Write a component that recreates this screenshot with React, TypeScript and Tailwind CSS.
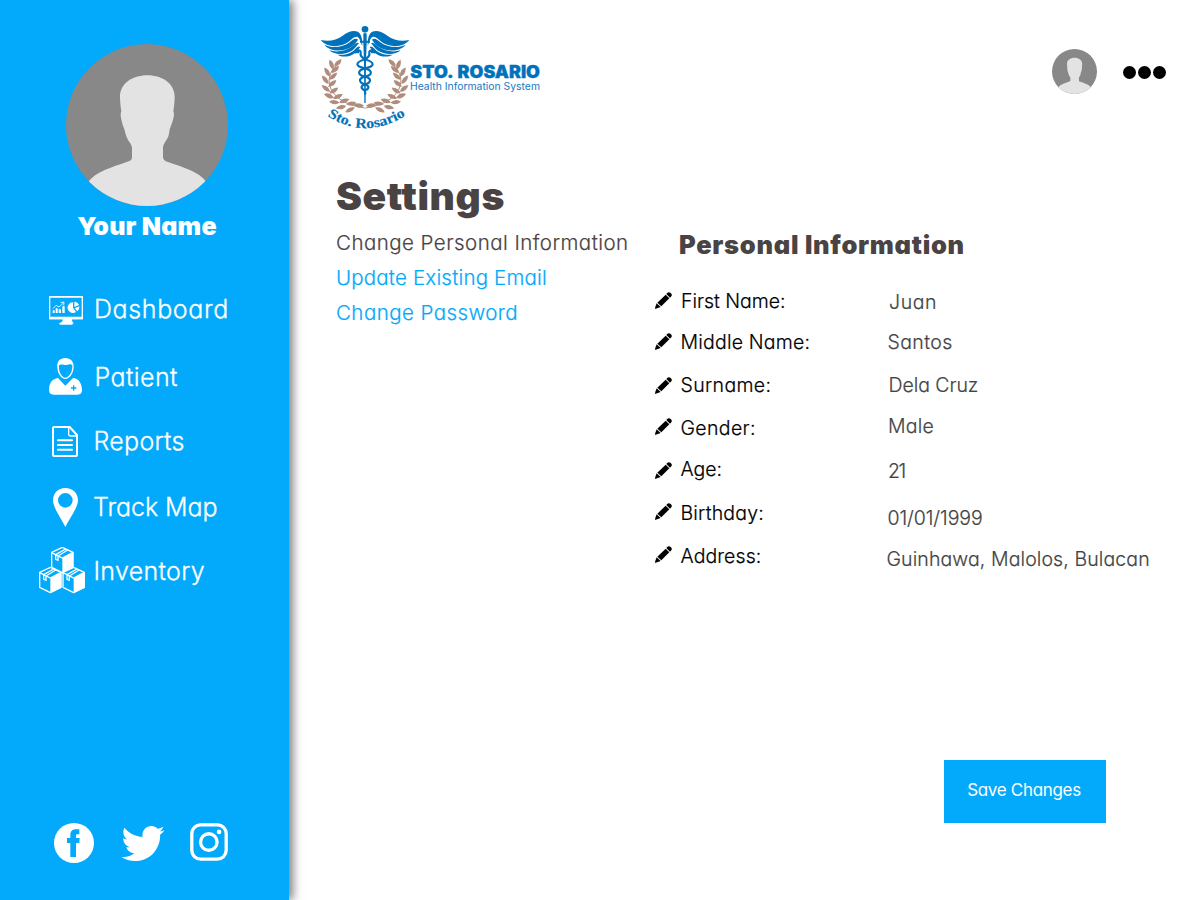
import type { ReactNode } from 'react';
import { FaTwitter } from 'react-icons/fa';

function Avatar({ className }: { className: string }) {
  return (
    <svg viewBox="47 27 486 486" className={className}>
      <defs>
        <clipPath id="avatar-clip">
          <circle cx="290" cy="270" r="243" />
        </clipPath>
      </defs>
      <circle cx="290" cy="270" r="243" fill="#888888" />
      <path
        clipPath="url(#avatar-clip)"
        fill="#e3e3e3"
        d="M291 121C243 121 207 148 209 190C210 207 211 219 213 229C208 238 213 252 217 270C223 283 224 292 228 304C233 320 245 326 245 340V368C245 375 238 378 229 381C185 396 135 412 116 438L110 530H480L466 438C447 412 397 396 353 381C343 378 338 374 338 366V340C338 326 349 318 354 304C358 292 356 284 362 272C368 256 374 238 369 229C371 219 372 207 373 190C375 148 339 121 291 121Z"
      />
    </svg>
  );
}

const LEFT_LEAVES: [number, number, number][] = [
  [84, 144, -42], [65, 149, -108], [76, 164, -38], [52, 171, -118], [70, 184, -38],
  [46, 194, -124], [67, 206, -36], [48, 220, -138], [72, 227, -30], [57, 242, -154],
  [84, 245, -22], [73, 261, -170], [103, 258, -14], [93, 276, 170], [124, 266, -4],
  [120, 284, 158], [146, 272, 8],
];

function Laurel() {
  return (
    <g fill="#b08c7c">
      <path d="M80 150C36 190 52 262 164 279" fill="none" stroke="#b08c7c" strokeWidth="3" />
      {LEFT_LEAVES.map(([x, y, a]) => (
        <path key={`${x}-${y}`} transform={`translate(${x} ${y}) rotate(${a})`} d="M-16 1Q-4 -13 16 -2Q3 12 -16 1Z" />
      ))}
    </g>
  );
}

function Wing() {
  return (
    <g fill="#0072bc">
      <path d="M32 75C58 80 78 76 98 62C116 48 138 42 149 55C156 64 157 76 157 92C151 82 150 67 141 65C132 64 124 74 115 81C92 97 52 100 32 75Z" />
      <path d="M43 89C68 101 99 96 117 83C127 75 137 67 144 74C140 80 134 89 125 95C104 109 62 113 43 89Z" />
      <path d="M58 106C80 113 107 108 124 96C132 90 140 79 147 85C141 91 136 99 128 106C108 119 76 122 58 106Z" />
      <path d="M82 119C99 121 116 118 130 108C138 102 144 90 151 97C145 103 141 110 132 116C118 126 96 128 82 119Z" />
    </g>
  );
}

function Logo() {
  return (
    <svg viewBox="0 0 720 375" className="h-[125px] w-[240px]">
      <defs>
        <path id="seal-arc" d="M52 303Q166 377 288 301" />
      </defs>
      <Laurel />
      <g transform="translate(330 0) scale(-1 1)">
        <Laurel />
      </g>
      <Wing />
      <g transform="translate(330 0) scale(-1 1)">
        <Wing />
      </g>
      <circle cx="165" cy="43" r="10" fill="#0072bc" />
      <path d="M160 55H170V77H180V83H170L168 140L167 264H163L162 140L160 83H150V77H160Z" fill="#0072bc" />
      <g fill="none" stroke="#0072bc" strokeLinecap="round" strokeWidth="6.500">
        <path d="M136 112C140 102 154 105 152 114C150 122 156 128 165 133C197 143 194 154 165 160C141 166 142 180 165 185C186 190 184 203 165 208C151 213 152 221 164 226L166 236" />
        <path d="M194 112C190 102 176 105 178 114C180 122 174 128 165 133C133 143 136 154 165 160C189 166 188 180 165 185C144 190 146 203 165 208C179 213 178 221 166 226" />
      </g>
      <path d="M129 114Q137 100 151 106L146 115ZM201 114Q193 100 179 106L184 115Z" fill="#0072bc" />
      <text className="font-['Liberation_Serif',serif] text-[42px] font-bold" fill="#0072bc" stroke="#0072bc" strokeWidth="0.5">
        <textPath href="#seal-arc" textLength="250" lengthAdjust="spacingAndGlyphs">Sto. Rosario</textPath>
      </text>
      <text x="301" y="188" textLength="389" lengthAdjust="spacingAndGlyphs" fill="#0072bc" stroke="#0072bc" strokeWidth="1" className="font-['Inter',sans-serif] text-[51px] font-black [word-spacing:4px]">
        STO. ROSARIO
      </text>
      <text x="300" y="225" textLength="390" lengthAdjust="spacingAndGlyphs" fill="#1579c0" className="font-['Inter',sans-serif] text-[31px] font-normal [font-feature-settings:normal]">
        Health Information System
      </text>
    </svg>
  );
}

function DashboardIcon() {
  return (
    <svg viewBox="24 0 144 144" className="size-12" fill="#fff">
      <path fillRule="evenodd" d="M59 33H157Q159 33 159 35V101Q159 103 157 103H126V106Q127 113 132 115Q127 115 127 119H90Q90 115 85 115Q97 113 98 106V103H59Q57 103 57 101V35Q57 33 59 33ZM61 38V95H155V38Z" />
      <path d="M57 97H159V103H57ZM68 76H74V84H68ZM77 70H83V84H77ZM86 73H93V84H86ZM97 64H104V84H97Z" />
      <path d="M69 71L78 61L87 66L100 54M92 53L102 51L101 61" fill="none" stroke="#fff" strokeWidth="2.500" />
      <path d="M129 52A16 16 0 1 0 138 81L129 68Z" />
      <path d="M133 50A16 16 0 0 1 147 60L133 66ZM134 70L148 64A16 16 0 0 1 142 79Z" />
    </svg>
  );
}

function PatientIcon() {
  return (
    <svg viewBox="24 204 144 144" className="size-12" fill="#fff">
      <path fillRule="evenodd" d="M106 219C89 219 80 230 82 247C83 267 94 282 106 282C118 282 130 267 131 247C132 230 122 219 106 219ZM87 240C96 236 100 240 109 240C117 240 121 235 127 241C128 260 118 278 106 278C95 278 85 260 87 240Z" />
      <path fillRule="evenodd" d="M84 279L106 302L129 279C145 280 156 294 156 315Q156 329 143 329H71Q57 329 57 315C57 294 67 281 84 279ZM129 301V307H123V311H129V317H133V311H139V307H133V301Z" />
    </svg>
  );
}

function ReportsIcon() {
  return (
    <svg viewBox="24 396 144 144" className="size-12" fill="none" stroke="#fff" strokeWidth="6" strokeLinejoin="round">
      <path d="M72 426H119L141 450V510Q141 513 138 513H72Q69 513 69 510V429Q69 426 72 426Z" />
      <path d="M116 427V448Q116 453 121 453H140" strokeWidth="4" />
      <path d="M84 466H126M84 480H126M84 494H126" strokeLinecap="round" />
    </svg>
  );
}

function PinIcon() {
  return (
    <svg viewBox="24 24 144 144" className="size-12" fill="#fff">
      <path fillRule="evenodd" d="M106 39C84 39 69 55 69 76C69 98 92 127 106 156C120 127 144 98 144 76C144 55 128 39 106 39ZM106 54A22 22 0 1 1 106 98A22 22 0 1 1 106 54Z" />
    </svg>
  );
}

function Box({ x, y }: { x: number; y: number }) {
  return (
    <g transform={`translate(${x} ${y})`}>
      <path d="M34 1L66 16V61L34 77L2 61V16Z" fill="#03a9fa" stroke="#fff" strokeWidth="4" strokeLinejoin="round" />
      <path d="M34 33L67 16V62L34 78Z" fill="#fff" />
      <path d="M2 17L34 33L66 16M14 23V37L21 40V27L50 9M14 23L44 6" fill="none" stroke="#fff" strokeWidth="4" />
    </g>
  );
}

function InventoryIcon() {
  return (
    <svg viewBox="24 216 144 144" className="size-12">
      <Box x={63} y={216} />
      <Box x={27} y={276} />
      <Box x={97} y={276} />
    </svg>
  );
}

function FacebookIcon() {
  return (
    <svg viewBox="42 39 120 120" className="size-10">
      <circle cx="102" cy="99" r="60" fill="#fff" />
      <path fill="#03a9fa" d="M91 141V99H81V84H91V76C91 64 97 58 108 58H118V73H112C109 73 108 75 108 78V84H119L118 99H108V141Z" />
    </svg>
  );
}

function InstagramIcon() {
  return (
    <svg viewBox="450 39 115 115" className="size-[38px]" fill="none" stroke="#fff" strokeWidth="10">
      <rect x="455.500" y="44.500" width="104" height="104" rx="27" />
      <circle cx="507" cy="96.500" r="25" />
      <circle cx="538" cy="66" r="7" fill="#fff" stroke="none" />
    </svg>
  );
}

function PencilIcon() {
  return (
    <svg viewBox="0 0 51 51" className="size-[17px]" fill="#000">
      <path d="M36 4Q41 -2 47 3Q54 9 47 15L45 17L34 6Z" />
      <path d="M32 8L43 19L19 43L7 32Z" />
      <path d="M5 34L17 45L0 51L1 44Z" />
    </svg>
  );
}

const NAV: { label: string; icon: ReactNode; row: string; text: string }[] = [
  { label: 'Dashboard', icon: <DashboardIcon />, row: 'h-[68px]', text: 'ml-[8px] tracking-[0.63px]' },
  { label: 'Patient', icon: <PatientIcon />, row: 'h-[64px]', text: 'ml-[8.5px] tracking-[0.4px]' },
  { label: 'Reports', icon: <ReportsIcon />, row: 'h-[66px]', text: 'ml-[7.5px] tracking-[0.27px]' },
  { label: 'Track Map', icon: <PinIcon />, row: 'h-[64px]', text: 'ml-[7px] tracking-[-0.05px]' },
  { label: 'Inventory', icon: <InventoryIcon />, row: 'h-[40px]', text: 'ml-[7.5px] tracking-[0.3px]' },
];

const FIELDS = [
  { label: 'First Name:', value: 'Juan', row: 'h-[41px]', icon: 'mt-[6px]', l: 'pl-[9px] tracking-[-0.02px]', v: 'mt-[1px] pl-[2.5px] tracking-[0.6px]' },
  { label: 'Middle Name:', value: 'Santos', row: 'h-[43px]', icon: 'mt-[6px]', l: 'pl-[8.5px] tracking-[0.2px]', v: 'pl-[1px] tracking-[0.4px]' },
  { label: 'Surname:', value: 'Dela Cruz', row: 'h-[43px]', icon: 'mt-[7px]', l: 'pl-[8.5px] tracking-[0.35px]', v: 'pl-[2px] tracking-[-0.06px]' },
  { label: 'Gender:', value: 'Male', row: 'h-[41px]', icon: 'mt-[5px]', l: 'pl-[8.5px] tracking-[0.35px]', v: '-mt-[2px] pl-[1.5px] tracking-[0.2px]' },
  { label: 'Age:', value: '21', row: 'h-[44px]', icon: 'mt-[8px]', l: 'pl-[8.5px] tracking-[-0.05px]', v: 'mt-[2px] pl-[1.5px] tracking-[-1.5px]' },
  { label: 'Birthday:', value: '01/01/1999', row: 'h-[43px]', icon: 'mt-[5px]', l: 'pl-[8.5px] tracking-[0.2px]', v: 'mt-[5px] pl-[1px] tracking-[-0.08px]' },
  { label: 'Address:', value: 'Guinhawa, Malolos, Bulacan', row: 'h-[30px]', icon: 'mt-[5px]', l: 'pl-[8.5px] tracking-[0.1px]', v: 'mt-[3px] tracking-[0.1px]' },
];

export default function App() {
  return (
    <div className="flex h-[900px] w-[1200px] overflow-hidden bg-white font-['Inter',sans-serif] [font-feature-settings:'cv11']">
      <aside className="flex w-[289px] shrink-0 flex-col bg-[#03a9fa] text-white shadow-[4px_0_9px_rgba(0,0,0,0.5)]">
        <div className="flex flex-col items-center pt-[44px] pl-[4px]">
          <Avatar className="size-[162px]" />
          <h2 className="mt-[5px] pl-px text-[25px] leading-[30px] font-black tracking-[0.2px]">Your Name</h2>
        </div>
        <nav className="mt-12 flex flex-col pl-[38px]">
          {NAV.map((n) => (
            <a key={n.label} className={`flex items-start ${n.row}`}>
              <span className="flex h-10 w-12 items-center">
                <span className="-my-1 shrink-0">{n.icon}</span>
              </span>
              <span className={`text-[25px] leading-10 font-light [-webkit-text-stroke:0.3px] ${n.text}`}>{n.label}</span>
            </a>
          ))}
        </nav>
        <div className="mt-auto flex items-start pb-[35px] pl-[54px]">
          <FacebookIcon />
          <FaTwitter className="mt-[-1px] ml-[27px] h-[43px] w-[44px]" />
          <span className="ml-[25px]">
            <InstagramIcon />
          </span>
        </div>
      </aside>

      <main className="flex flex-1 flex-col">
        <header className="flex items-start justify-between pt-[15px] pr-[34px] pl-[21px]">
          <Logo />
          <div className="mt-[34px] flex items-center">
            <Avatar className="size-[45px]" />
            <div className="ml-[26px] flex gap-[2px] pt-px">
              <span className="size-[13px] rounded-full bg-black" />
              <span className="size-[13px] rounded-full bg-black" />
              <span className="size-[13px] rounded-full bg-black" />
            </div>
          </div>
        </header>

        <div className="flex pt-[32px] pl-[47px]">
          <section className="w-[319px] shrink-0">
            <h1 className="text-[39px] leading-[48px] font-black tracking-[0.6px] text-[#4a4344]">Settings</h1>
            <div className="mt-[5px] flex flex-col text-[20.500px] leading-[35px] font-light whitespace-nowrap text-[#03a9fa] [-webkit-text-stroke:0.2px]">
              <a className="tracking-[0.46px] text-[#4a4344]">Change Personal Information</a>
              <a className="tracking-[0.18px]">Update Existing Email</a>
              <a className="tracking-[0.44px]">Change Password</a>
            </div>
          </section>

          <section className="flex-1 pt-[55px]">
            <h2 className="pl-[24px] text-[25.500px] leading-9 font-black tracking-[0.71px] text-[#4a4344]">Personal Information</h2>
            <div className="mt-[23px] flex flex-col text-[19.500px] leading-[30px] font-light whitespace-nowrap [-webkit-text-stroke:0.2px]">
              {FIELDS.map((f) => (
                <div key={f.label} className={`flex items-start ${f.row}`}>
                  <span className={f.icon}>
                    <PencilIcon />
                  </span>
                  <span className={`w-[214.500px] text-black ${f.l}`}>{f.label}</span>
                  <span className={`text-[#444444] ${f.v}`}>{f.value}</span>
                </div>
              ))}
            </div>
          </section>
        </div>

        <button className="mt-auto mr-[94px] mb-[77px] h-[63px] w-[162px] self-end bg-[#03a9fa] pr-[2px] pb-[2px] text-[17px] font-normal tracking-[-0.32px] text-white">
          Save Changes
        </button>
      </main>
    </div>
  );
}
